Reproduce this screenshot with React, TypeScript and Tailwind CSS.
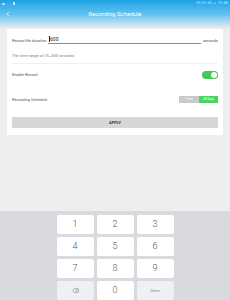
import { Delete } from "lucide-react";

const keys = ["1", "2", "3", "4", "5", "6", "7", "8", "9"];

function StatusBar() {
  return (
    <div className="flex h-[7px] items-center justify-between px-[2px] text-[3px] leading-none text-white/80">
      <div className="flex items-center gap-[8px]">
        <span className="h-[2px] w-[3px] rounded-[1px] bg-white/70" />
        <span className="h-[3px] w-[2px] bg-white/70" />
      </div>
      <span className="tracking-[0.5px]">55 01:55 ⊿ 19:48</span>
    </div>
  );
}

function Toggle() {
  return (
    <div className="flex h-[8px] w-[16px] items-center justify-end rounded-full bg-[#44c85a] p-[1px]">
      <span className="h-[6px] w-[6px] rounded-full bg-white" />
    </div>
  );
}

export default function App() {
  return (
    <div className="flex h-[300px] w-[230px] flex-col bg-[#eeeeee] font-['Roboto',sans-serif]">
      <div className="bg-gradient-to-b from-[#19a3e4] via-[#5fc2f0] to-[#eeeeee] pb-[8px]">
        <StatusBar />
        <div className="grid h-[14px] grid-cols-[20px_1fr_20px] items-center text-white">
          <svg viewBox="0 0 10 10" className="ml-[5px] h-[6px] w-[6px]">
            <path d="M6.5 1.5 3 5l3.5 3.5" fill="none" stroke="white" strokeWidth="1.2" />
          </svg>
          <span className="text-center text-[6px] leading-none">Recording Schedule</span>
          <span />
        </div>
      </div>

      <div className="mx-[7px] bg-white px-[5px] pb-[7px] pt-[8px] text-[4px] leading-none text-[#555]">
        <div className="flex items-end gap-[1px]">
          <span className="pb-[1px]">Record file duration</span>
          <div className="flex-1 border-b border-[#3bb39a] pb-[1px] pl-[1px] text-[5px] text-[#222]">
            <span className="border-l border-[#222] pl-[0.5px]">600</span>
          </div>
          <span className="pb-[1px] pl-[1px]">seconds</span>
        </div>
        <div className="border-b border-[#f0f0f0] pb-[5px] pt-[10px] text-[#808080]">
          The time range of 15~600 seconds
        </div>
        <div className="flex h-[21px] items-center justify-between">
          <span>Enable Record</span>
          <Toggle />
        </div>
        <div className="flex h-[29px] items-center justify-between">
          <span>Recording Schedule</span>
          <div className="flex h-[7px] text-[3px] text-white">
            <span className="flex w-[20px] items-center justify-center bg-[#c9c9c9]">Timer</span>
            <span className="flex w-[19px] items-center justify-center bg-[#4cd461]">All Days</span>
          </div>
        </div>
        <button className="mt-[3px] flex h-[11px] w-full items-center justify-center bg-[#d6d6d6] text-[4px] font-bold text-[#333]">
          APPLY
        </button>
      </div>

      <div className="flex-1" />

      <div className="flex h-[89px] justify-center bg-[#d9dadd] pt-[4px]">
        <div className="grid h-fit grid-cols-[37px_37px_37px] gap-x-[3px] gap-y-[3px]">
          {keys.map((k) => (
            <div
              key={k}
              className="flex h-[19px] items-center justify-center rounded-[2px] bg-white text-[9px] font-light text-[#555]"
            >
              {k}
            </div>
          ))}
          <div className="flex h-[19px] items-center justify-center rounded-[2px] bg-[#eef0f3] text-[#666]">
            <Delete className="h-[7px] w-[7px]" strokeWidth={1.5} />
          </div>
          <div className="flex h-[19px] items-center justify-center rounded-[2px] bg-white text-[9px] font-light text-[#555]">
            0
          </div>
          <div className="flex h-[19px] items-center justify-center rounded-[2px] bg-[#eef0f3] text-[4px] text-[#7b8aa0]">
            Done
          </div>
        </div>
      </div>
    </div>
  );
}
